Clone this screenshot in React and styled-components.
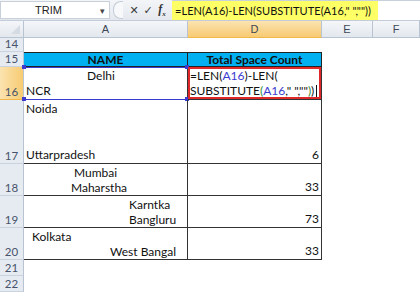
import React from "react";
import styled, { createGlobalStyle } from "styled-components";

const Global = createGlobalStyle`
  body {
    margin: 0;
    background: #ffffff;
    font-family: "Lato", "Liberation Sans", sans-serif;
  }
`;

const rows = [
  { num: 14, h: 14 },
  { num: 15, h: 15 },
  { num: 16, h: 33, active: true },
  { num: 17, h: 64 },
  { num: 18, h: 32 },
  { num: 19, h: 32 },
  { num: 20, h: 32 },
  { num: 21, h: 16 },
  { num: 22, h: 16 },
];

const names = {
  17: [
    { text: "Noida", pad: 2 },
    { text: "Uttarpradesh", pad: 2 },
  ],
  18: [
    { text: "Mumbai", pad: 50 },
    { text: "Maharstha", pad: 47 },
  ],
  19: [
    { text: "Karntka", pad: 105 },
    { text: "Bangluru", pad: 105 },
  ],
  20: [
    { text: "Kolkata", pad: 8 },
    { text: "West Bangal", pad: 86 },
  ],
};

const counts = { 17: 6, 18: 33, 19: 73, 20: 33 };

function App() {
  return (
    <Page>
      <Global />
      <FormulaBar>
        <NameBox>
          <NameText>TRIM</NameText>
          <Arrow>▾</Arrow>
        </NameBox>
        <Buttons>
          <Notch />
          <BarIcon>✕</BarIcon>
          <BarIcon>✓</BarIcon>
          <Fx>
            f<sub>x</sub>
          </Fx>
        </Buttons>
        <FormulaInput>
          <Formula>=LEN(A16)-LEN(SUBSTITUTE(A16," ",""))</Formula>
        </FormulaInput>
      </FormulaBar>

      <Sheet rowSizes={rows.map((r) => r.h + "px").join(" ")}>
        <Corner>
          <CornerMark />
        </Corner>
        <ColHead>A</ColHead>
        <ColHead active>D</ColHead>
        <ColHead>E</ColHead>
        <ColHead>F</ColHead>

        {rows.map((r) => (
          <React.Fragment key={r.num}>
            <RowHead active={r.active}>{r.num}</RowHead>
            {r.num === 14 || r.num > 20 ? (
              <>
                <Blank />
                <Blank />
              </>
            ) : r.num === 15 ? (
              <>
                <HeadCell>NAME</HeadCell>
                <HeadCell>Total Space Count</HeadCell>
              </>
            ) : r.num === 16 ? (
              <>
                <Cell selected>
                  <Line pad={63}>Delhi</Line>
                  <Line pad={2}>NCR</Line>
                  <Handle style={{ left: -2, top: -2 }} />
                  <Handle style={{ right: -2, top: -2 }} />
                  <Handle style={{ left: -2, bottom: -2 }} />
                  <Handle style={{ right: -2, bottom: -2 }} />
                </Cell>
                <Cell editing>
                  <Line pad={2}>
                    =LEN(<Ref>A16</Ref>)-LEN(
                  </Line>
                  <Line pad={2}>
                    SUBSTITUTE<Green>(</Green>
                    <Ref>A16</Ref>," ",""<Green>)</Green>)<Caret />
                  </Line>
                </Cell>
              </>
            ) : (
              <>
                <Cell>
                  {names[r.num].map((l) => (
                    <Line key={l.text} pad={l.pad}>
                      {l.text}
                    </Line>
                  ))}
                </Cell>
                <Cell>
                  <Spacer />
                  <Number>{counts[r.num]}</Number>
                </Cell>
              </>
            )}
            <Blank />
            <Blank />
          </React.Fragment>
        ))}
      </Sheet>
    </Page>
  );
}

export default App;

const Page = styled.div`
  width: 420px;
  height: 292px;
  overflow: hidden;
  display: flex;
  flex-direction: column;
`;

const FormulaBar = styled.div`
  height: 21px;
  display: flex;
  background: linear-gradient(#f3f5f8, #e4e8ee);
  border-bottom: 1px solid #c3ccd8;
  box-sizing: border-box;
`;

const NameBox = styled.div`
  width: 110px;
  display: flex;
  align-items: center;
  background: #ffffff;
  border: 1px solid #c8d0da;
  box-sizing: border-box;
  margin: 1px 0;
`;

const NameText = styled.span`
  flex: 1;
  padding-left: 22px;
  text-align: center;
  font-family: "Liberation Sans", sans-serif;
  font-size: 11px;
  color: #222;
  margin-right: 26px;
`;

const Arrow = styled.span`
  font-size: 9px;
  color: #444;
  margin-right: 4px;
`;

const Buttons = styled.div`
  width: 62px;
  display: flex;
  align-items: center;
  padding-left: 3px;
  box-sizing: border-box;
`;

const Notch = styled.div`
  width: 9px;
  height: 16px;
  border-radius: 8px 0 0 8px;
  border: 1px solid #c3ccd8;
  border-right: none;
  background: #f7f8fa;
  margin-right: 4px;
`;

const BarIcon = styled.span`
  font-family: "DejaVu Sans", sans-serif;
  font-size: 11px;
  font-weight: 700;
  color: #3a3a3a;
  width: 14px;
  text-align: center;
`;

const Fx = styled.span`
  width: 14px;
  text-align: center;
  font-family: "Liberation Serif", serif;
  font-style: italic;
  font-weight: 700;
  font-size: 12px;
  color: #333;
  sub {
    font-size: 7px;
  }
`;

const FormulaInput = styled.div`
  flex: 1;
  display: flex;
  align-items: center;
  background: #ffffff;
  border-top: 1px solid #c8d0da;
`;

const Formula = styled.span`
  background: #ffff66;
  height: 19px;
  display: flex;
  align-items: center;
  padding: 0 7px 0 3px;
  font-size: 11px;
  color: #111;
  letter-spacing: 0.05px;
`;

const Sheet = styled.div`
  display: grid;
  grid-template-columns: 24px 164px 134px 51px 1fr;
  grid-template-rows: 17px ${(p) => p.rowSizes};
  font-size: 12px;
`;

const Corner = styled.div`
  position: relative;
  background: linear-gradient(#f4f6f9, #e3e8ee);
  border-right: 1px solid #b9c4d2;
  border-bottom: 1px solid #b9c4d2;
`;

const CornerMark = styled.div`
  position: absolute;
  right: 3px;
  bottom: 3px;
  width: 0;
  height: 0;
  border-left: 9px solid transparent;
  border-bottom: 9px solid #d5dbe3;
`;

const ColHead = styled.div`
  display: flex;
  align-items: center;
  justify-content: center;
  font-family: "Liberation Sans", sans-serif;
  font-size: 11px;
  color: #3d4756;
  background: ${(p) =>
    p.active
      ? "linear-gradient(#fbe3b0, #f7cb72)"
      : "linear-gradient(#f4f6f9, #e3e8ee)"};
  border-right: 1px solid #b9c4d2;
  border-bottom: 1px solid ${(p) => (p.active ? "#f2b84b" : "#b9c4d2")};
`;

const RowHead = styled.div`
  display: flex;
  align-items: flex-end;
  justify-content: center;
  padding-bottom: 1px;
  font-size: 11.5px;
  color: #46536a;
  background: ${(p) => (p.active ? "linear-gradient(90deg, #fbe3b0, #f7cb72)" : "#e6ebf2")};
  border-right: 1px solid #b9c4d2;
  border-bottom: 1px solid ${(p) => (p.active ? "#f2b84b" : "#c9d2de")};
  box-sizing: border-box;
`;

const Blank = styled.div`
  background: #ffffff;
`;

const HeadCell = styled.div`
  display: flex;
  align-items: center;
  justify-content: center;
  background: #00b0f0;
  font-weight: 700;
  color: #111;
  border-top: 1px solid #222;
  border-right: 1px solid #222;
  border-bottom: 1px solid #222;
  box-sizing: border-box;
`;

const Cell = styled.div`
  position: relative;
  display: flex;
  flex-direction: column;
  justify-content: space-between;
  padding: 1px 0;
  border-right: 1px solid #333;
  border-bottom: 1px solid ${(p) => (p.selected ? "#3b3bd0" : "#333")};
  box-sizing: border-box;
  color: #111;
  box-shadow: ${(p) =>
    p.editing
      ? "inset 0 0 0 2px #e0282a"
      : p.selected
      ? "inset 0 1px 0 #3b3bd0"
      : "none"};
`;

const Line = styled.div`
  padding-left: ${(p) => p.pad}px;
  line-height: 15px;
  white-space: nowrap;
`;

const Spacer = styled.div``;

const Number = styled.div`
  text-align: right;
  padding-right: 2px;
  line-height: 15px;
`;

const Ref = styled.span`
  color: #3b3bd0;
`;

const Green = styled.span`
  color: #2e8b3a;
`;

const Caret = styled.span`
  display: inline-block;
  width: 1px;
  height: 12px;
  background: #111;
  margin-left: 2px;
  vertical-align: -2px;
`;

const Handle = styled.div`
  position: absolute;
  width: 4px;
  height: 4px;
  background: #3b3bd0;
`;
